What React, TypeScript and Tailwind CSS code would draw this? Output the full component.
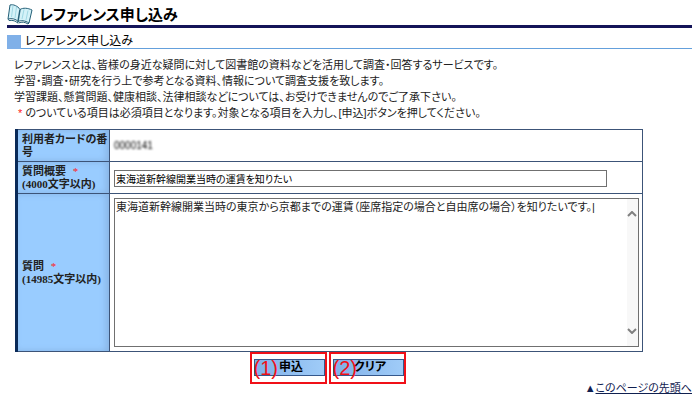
import React, { useState } from 'react';

const Required = () => <span className="ml-1 font-normal text-[#ff2020]">*</span>;

const BookIcon = () => (
  <svg className="h-[22px] w-[26px] shrink-0" viewBox="0 0 26 22" fill="#d4f2f8" stroke="#256078" strokeWidth="1" strokeLinejoin="round">
    <path d="M3 2 C6 1 11 3 13 6.500 C16 4.500 21 5 25 7 L22 20 C18 17.500 14 17 11 18.500 C9 16 5 15 1 16 Z" />
    <path d="M1 16 L2 17.500 C6 17 9 18 10.500 20 L11 18.500 M11.500 20 C15 18.500 18 19 21 21 L22 20" fill="none" />
    <path d="M13 6.500 L11 18.500" fill="none" strokeWidth="1.500" />
    <path d="M6 2.500 L4.500 14 M9.500 4 L8 15 M17 6.500 L15 16 M21 7.500 L19 17" fill="none" stroke="#a0d8e4" />
  </svg>
);

interface StepButtonProps {
  step: string;
  label: string;
  onClick?: () => void;
}

const StepButton: React.FC<StepButtonProps> = ({ step, label, onClick }) => (
  <div className="relative h-8 w-[77px] border-2 border-[#f01018] pt-[5px] pl-[2px]">
    <button
      type="button"
      onClick={onClick}
      className="block h-[17px] w-full border border-[#35588c] bg-linear-to-r from-[#80b0e8] to-[#a0ccf8] pl-1 text-center text-xs leading-[15px] font-bold text-black"
    >
      {label}
    </button>
    <span className="pointer-events-none absolute top-[4px] left-[2px] font-['Liberation_Sans',sans-serif] text-xl leading-5 text-[#f01018]">
      {step}
    </span>
  </div>
);

const headCell =
  'w-[93px] border border-l-[3px] border-[#3c5478] border-l-[#0a2a58] bg-[#99ccff] pl-1 text-left align-middle font-bold shadow-[inset_-3px_0_6px_#88b4e4]';
const bodyCell = 'border border-[#3c5478] pr-[3px] pl-1';

export default function App() {
  const [summary, setSummary] = useState('東海道新幹線開業当時の運賃を知りたい');
  const [question, setQuestion] = useState(
    '東海道新幹線開業当時の東京から京都までの運賃（座席指定の場合と自由席の場合）を知りたいです。|'
  );

  const clearForm = () => {
    setSummary('');
    setQuestion('');
  };

  return (
    <main className="bg-white pt-[3px] pr-1.5 pl-[7px] font-['Liberation_Sans','Noto_Sans_CJK_JP',sans-serif] text-[11px] leading-4 text-[#222] [font-feature-settings:'palt']">
      <h1 className="flex h-[25px] items-start gap-1.5 border-b-[3px] border-[#141458] text-[15px] leading-[23px] font-bold text-black">
        <BookIcon />
        レファレンス申し込み
      </h1>
      <h2 className="mt-[7px] flex h-[14px] items-center gap-1 border-b border-[#64a0dc] text-xs leading-[13px] text-black">
        <span className="h-[14px] w-[14px] bg-[#80b0e8]" />
        レファレンス申し込み
      </h2>

      <div className="mt-2 pl-[7px]">
        <p>レファレンスとは、皆様の身近な疑問に対して図書館の資料などを活用して調査・回答するサービスです。</p>
        <p>学習・調査・研究を行う上で参考となる資料、情報について調査支援を致します。</p>
        <p>学習課題、懸賞問題、健康相談、法律相談などについては、お受けできませんのでご了承下さい。</p>
        <p>
          <Required /> のついている項目は必須項目となります。対象となる項目を入力し、[申込]ボタンを押してください。
        </p>
      </div>

      <form onSubmit={(e) => e.preventDefault()}>
        <table className="mt-2 ml-2 w-11/12 table-fixed border-collapse font-['Liberation_Serif','Noto_Sans_CJK_JP',serif] text-[11px] leading-[13px]">
          <tbody>
            <tr className="h-8">
              <th scope="row" className={headCell}>利用者カードの番号</th>
              <td className={bodyCell}>
                <span className="font-['Liberation_Sans',sans-serif] text-[10px] text-black blur-[1px]">0000141</span>
              </td>
            </tr>
            <tr className="h-8">
              <th scope="row" className={headCell}>
                <label htmlFor="summary">
                  質問概要 <Required />
                  <br />
                  (4000文字以内)
                </label>
              </th>
              <td className={`${bodyCell} pt-[2px]`}>
                <input
                  id="summary"
                  type="text"
                  value={summary}
                  onChange={(e) => setSummary(e.target.value)}
                  className="block h-[17px] w-[94%] border border-[#707070] px-px font-['Liberation_Sans','Noto_Sans_CJK_JP',sans-serif] text-[10px] text-black outline-none"
                />
              </td>
            </tr>
            <tr>
              <th scope="row" className={headCell}>
                <label htmlFor="question">
                  質問 <Required />
                  <br />
                  (14985文字以内)
                </label>
              </th>
              <td className={`${bodyCell} py-1`}>
                <div className="relative">
                  <textarea
                    id="question"
                    value={question}
                    onChange={(e) => setQuestion(e.target.value)}
                    className="block h-[149px] w-full resize-none overflow-hidden border border-[#707070] px-px font-['Liberation_Sans','Noto_Sans_CJK_JP',sans-serif] text-[11px] leading-4 text-[#222] outline-none"
                  />
                  <div className="pointer-events-none absolute inset-y-px right-px flex w-[11px] flex-col items-center justify-between bg-[#f8f8f8] py-3">
                    <svg className="h-[6px] w-[10px]" viewBox="0 0 10 6" fill="none" stroke="#808080" strokeWidth="2">
                      <path d="M1 5 L5 1 L9 5" />
                    </svg>
                    <svg className="h-[6px] w-[10px]" viewBox="0 0 10 6" fill="none" stroke="#808080" strokeWidth="2">
                      <path d="M1 1 L5 5 L9 1" />
                    </svg>
                  </div>
                </div>
              </td>
            </tr>
          </tbody>
        </table>

        <div className="flex justify-center gap-0.5 pr-[44px]">
          <StepButton step="(1)" label="申込" />
          <StepButton step="(2)" label="クリア" onClick={clearForm} />
        </div>
      </form>

      <p className="-mt-1 text-right text-[#102050]">
        ▲<a href="#root" className="underline">このページの先頭へ</a>
      </p>
    </main>
  );
}
